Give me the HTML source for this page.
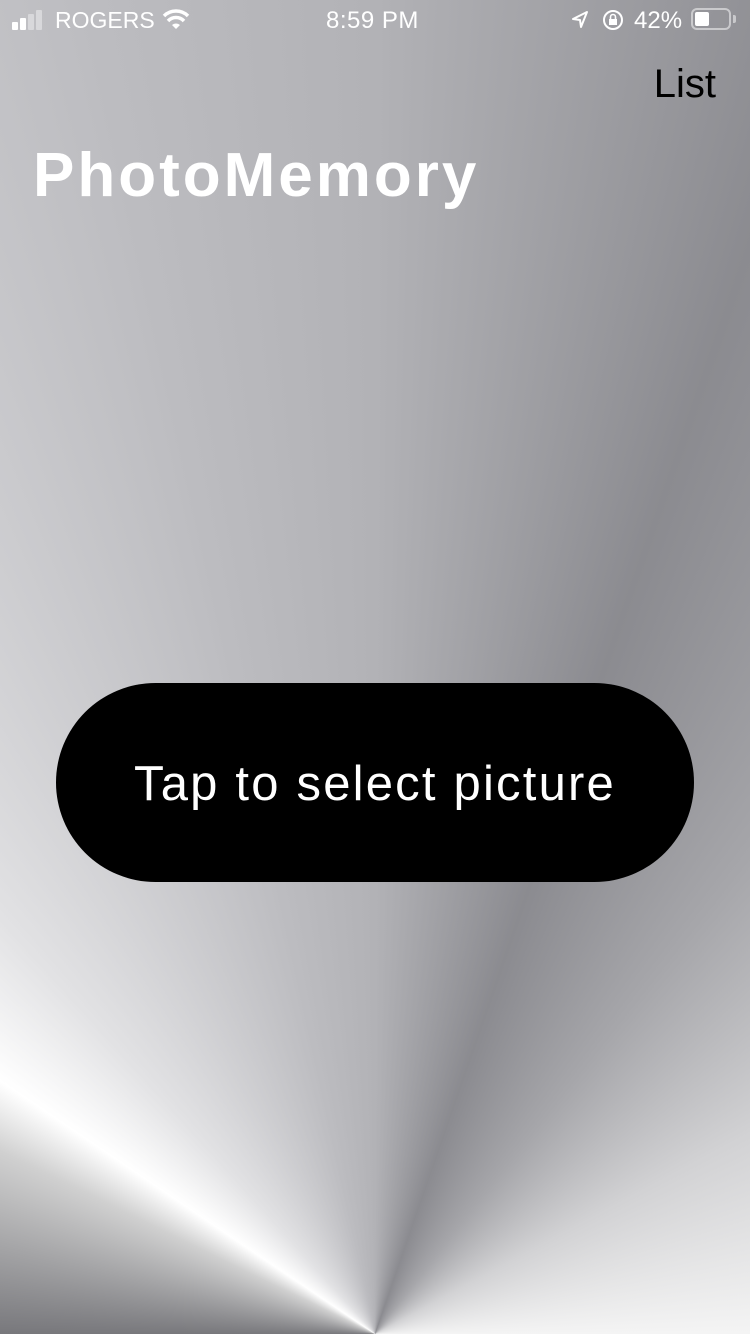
<!DOCTYPE html>
<html><head><meta charset="utf-8"><style>
html,body{margin:0;padding:0}
body{width:750px;height:1334px;position:relative;overflow:hidden;font-family:"Liberation Sans",sans-serif;
background:conic-gradient(from 0deg at 375px 1334px,#b2b2b6 0deg,#8b8b90 19deg,#a6a6aa 38deg,#d2d2d4 62deg,#f4f4f4 90deg,#dddddd 180deg,#78787c 270deg,#d0d0d0 296deg,#ffffff 304deg,#e2e2e4 318deg,#d0d0d3 332deg,#bcbcc0 348deg,#b2b2b6 360deg);}
.sb{position:absolute;top:0;left:0;width:750px;height:40px;color:#fff;font-size:24px}
.t{position:absolute;top:7px}
.title{position:absolute;left:33px;top:140px;font-size:62px;font-weight:bold;color:#fff;letter-spacing:3px}
.list{position:absolute;right:34px;top:62px;font-size:40px;color:#000}
.btn{position:absolute;left:56px;top:683px;width:638px;height:199px;border-radius:100px;background:#000;color:#fff;font-size:49px;letter-spacing:2.2px;text-align:center;line-height:203px}
</style></head><body>
<div class="sb">
 <div style="position:absolute;left:12px;top:22px;width:6px;height:8px;background:#fff;border-radius:1px"></div>
 <div style="position:absolute;left:20px;top:18px;width:6px;height:12px;background:#fff;border-radius:1px"></div>
 <div style="position:absolute;left:28px;top:14px;width:6px;height:16px;background:rgba(255,255,255,.4);border-radius:1px"></div>
 <div style="position:absolute;left:36px;top:10px;width:6px;height:20px;background:rgba(255,255,255,.4);border-radius:1px"></div>
 <div class="t" style="left:55px;font-size:23px">ROGERS</div>
 <svg style="position:absolute;left:162px;top:8px" width="28" height="22" viewBox="0 0 28 22"><path d="M14 21 L10 17 A6 6 0 0 1 18 17 Z" fill="#fff"/><path d="M6 13 A11 11 0 0 1 22 13" stroke="#fff" stroke-width="3.5" fill="none"/><path d="M2 8 A17 17 0 0 1 26 8" stroke="#fff" stroke-width="3.5" fill="none"/></svg>
 <div class="t" style="left:326px;letter-spacing:0.5px">8:59 PM</div>
 <svg style="position:absolute;left:570px;top:10px" width="20" height="20" viewBox="0 0 20 20"><path d="M17 2 L3 9 L10 10 L11 17 Z" stroke="#fff" stroke-width="2" fill="none" stroke-linejoin="round"/></svg>
 <svg style="position:absolute;left:601px;top:8px" width="24" height="24" viewBox="0 0 24 24"><circle cx="12" cy="12" r="9" stroke="#fff" stroke-width="2" fill="none"/><rect x="8" y="11" width="8" height="6" fill="#fff"/><path d="M9.5 11 V9 a2.5 2.5 0 0 1 5 0 V11" stroke="#fff" stroke-width="1.6" fill="none"/></svg>
 <div class="t" style="left:634px">42%</div>
 <div style="position:absolute;left:691px;top:8px;width:40px;height:22px;border:2px solid rgba(255,255,255,.5);border-radius:6px;box-sizing:border-box"></div>
 <div style="position:absolute;left:695px;top:12px;width:14px;height:14px;background:#fff;border-radius:2px"></div>
 <div style="position:absolute;left:733px;top:15px;width:3px;height:8px;background:rgba(255,255,255,.5);border-radius:0 2px 2px 0"></div>
</div>
<div class="list">List</div>
<div class="title">PhotoMemory</div>
<div class="btn">Tap to select picture</div>
</body></html>
